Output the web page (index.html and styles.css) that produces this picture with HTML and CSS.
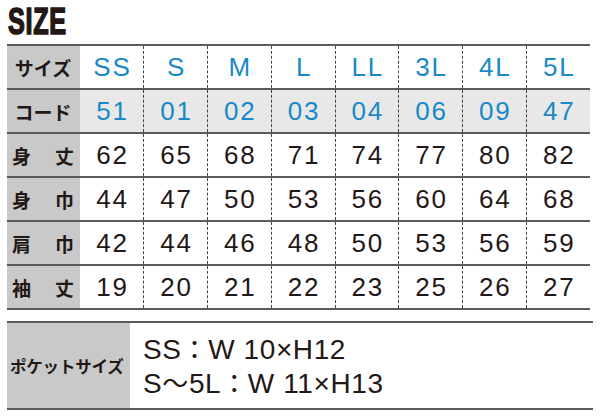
FILE: index.html
```html
<!DOCTYPE html>
<html lang="ja">
<head>
<meta charset="utf-8">
<title>SIZE</title>
<link rel="stylesheet" href="styles.css">
</head>
<body>
<div class="page">
  <h1 class="title"><span>SIZE</span></h1>
  <table class="size-table">
    <colgroup><col class="col-label"><col span="8"></colgroup>
    <tbody>
      <tr class="row-size">
        <th>サイズ</th>
        <td>SS</td><td>S</td><td>M</td><td>L</td><td>LL</td><td>3L</td><td>4L</td><td>5L</td>
      </tr>
      <tr class="row-code">
        <th>コード</th>
        <td>51</td><td>01</td><td>02</td><td>03</td><td>04</td><td>06</td><td>09</td><td>47</td>
      </tr>
      <tr>
        <th><span class="spread"><span>身</span><span>丈</span></span></th>
        <td>62</td><td>65</td><td>68</td><td>71</td><td>74</td><td>77</td><td>80</td><td>82</td>
      </tr>
      <tr>
        <th><span class="spread"><span>身</span><span>巾</span></span></th>
        <td>44</td><td>47</td><td>50</td><td>53</td><td>56</td><td>60</td><td>64</td><td>68</td>
      </tr>
      <tr>
        <th><span class="spread"><span>肩</span><span>巾</span></span></th>
        <td>42</td><td>44</td><td>46</td><td>48</td><td>50</td><td>53</td><td>56</td><td>59</td>
      </tr>
      <tr>
        <th><span class="spread"><span>袖</span><span>丈</span></span></th>
        <td>19</td><td>20</td><td>21</td><td>22</td><td>23</td><td>25</td><td>26</td><td>27</td>
      </tr>
    </tbody>
  </table>
  <div class="pocket">
    <div class="pocket-label">ポケットサイズ</div>
    <div class="pocket-body">
      <div>SS<span class="colon">：</span>W 10×H12</div>
      <div>S<span class="wave">〜</span>5L<span class="colon">：</span>W 11×H13</div>
    </div>
  </div>
</div>
</body>
</html>
```
FILE: styles.css
```css
html, body {
  margin: 0;
  padding: 0;
  background: #ffffff;
}

.page {
  width: 600px;
  height: 419px;
  overflow: hidden;
  font-family: "Liberation Sans", "Noto Sans CJK JP", sans-serif;
  color: #231815;
}

.title {
  margin: 0;
  height: 44px;
  padding-left: 8px;
  font-family: "Liberation Sans", sans-serif;
  font-weight: bold;
  font-size: 36px;
  line-height: 44px;
  color: #231815;
}

.title span {
  display: inline-block;
  transform: scaleX(0.7);
  transform-origin: left center;
  letter-spacing: 1px;
  -webkit-text-stroke: 1.6px #231815;
}

.size-table {
  margin-left: 7px;
  width: 583px;
  border-collapse: collapse;
  table-layout: fixed;
}

.col-label {
  width: 73px;
}

.size-table tr {
  border-top: 2px solid #5b5b5b;
  border-bottom: 2px solid #5b5b5b;
}

.size-table th,
.size-table td {
  height: 42px;
  padding: 0;
  text-align: center;
  vertical-align: middle;
}

.size-table th {
  background: #c9c9c9;
  font-family: "Noto Sans CJK JP", sans-serif;
  font-weight: bold;
  font-size: 19px;
  color: #231815;
  padding: 0 6px 0 5px;
}

.spread {
  display: flex;
  justify-content: space-between;
}

.size-table td {
  font-size: 26px;
  letter-spacing: 2px;
  text-indent: 2px;
  color: #231815;
  border-left: 1px dashed #444;
}

.size-table td:first-of-type {
  border-left: none;
}

.row-size td,
.row-code td {
  color: #1a88c6;
}

.row-code td {
  background: #e8e8e8;
}

.pocket {
  margin-top: 11px;
  margin-left: 7px;
  width: 586px;
  height: 85px;
  border-top: 2px solid #5b5b5b;
  border-bottom: 2px solid #5b5b5b;
  display: flex;
}

.pocket-label {
  width: 123px;
  background: #c9c9c9;
  display: flex;
  align-items: center;
  padding-left: 3px;
  box-sizing: border-box;
  font-family: "Noto Sans CJK JP", sans-serif;
  font-weight: bold;
  font-size: 16.5px;
  letter-spacing: -0.2px;
  color: #231815;
}

.pocket-body {
  padding-left: 13px;
  display: flex;
  flex-direction: column;
  justify-content: center;
  font-size: 28px;
  line-height: 32px;
  letter-spacing: 0.6px;
  color: #231815;
}

.colon {
  font-family: "Noto Sans CJK JP", sans-serif;
  font-size: 26px;
}

.wave {
  font-family: "Noto Sans CJK JP", sans-serif;
  font-size: 26px;
}
```
